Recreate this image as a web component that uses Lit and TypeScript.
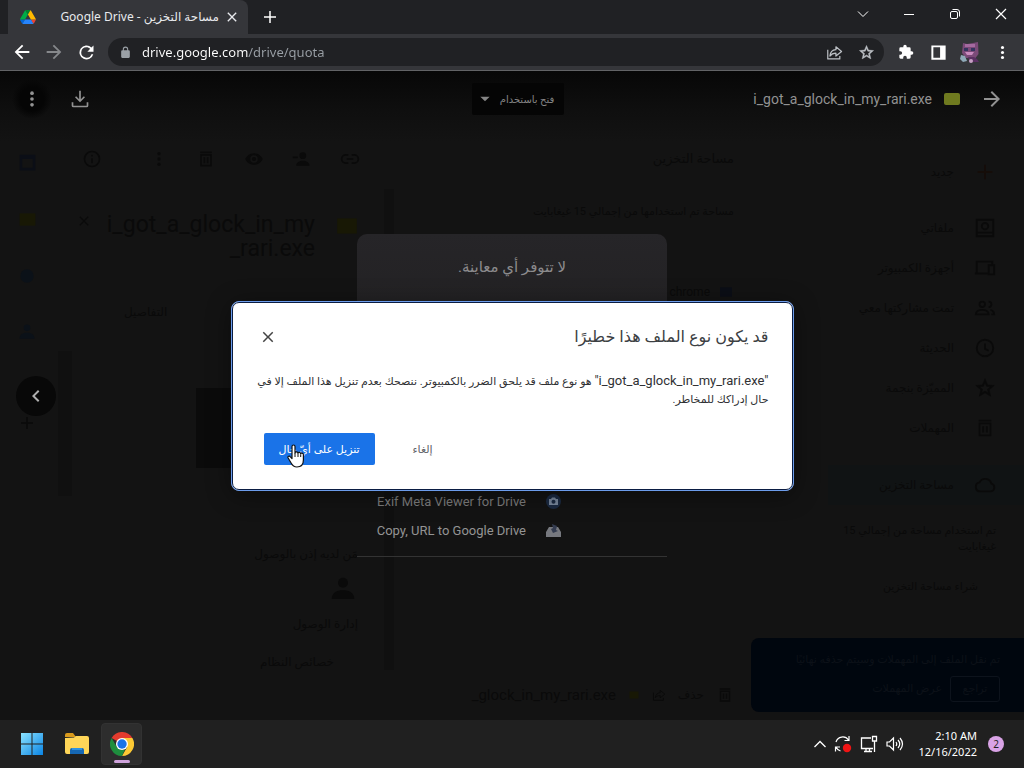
import { LitElement, html, css, svg, nothing } from "lit";
import { customElement, state } from "lit/decorators.js";

const glyphs: Record<string, unknown> = {
  back: svg`<path d="M20 11H7.8l5.6-5.6L12 4l-8 8 8 8 1.4-1.4L7.8 13H20z"/>`,
  forward: svg`<path d="M12 4l-1.4 1.4 5.6 5.6H4v2h12.2l-5.6 5.6L12 20l8-8z"/>`,
  reload: svg`<path d="M17.65 6.35A8 8 0 1 0 19.73 14h-2.08A6 6 0 1 1 12 6c1.66 0 3.14.69 4.22 1.78L13 11h7V4z"/>`,
  lock: svg`<path d="M18 8h-1V6A5 5 0 0 0 7 6v2H6a2 2 0 0 0-2 2v10a2 2 0 0 0 2 2h12a2 2 0 0 0 2-2V10a2 2 0 0 0-2-2zM9 6a3 3 0 0 1 6 0v2H9z"/>`,
  share: svg`<path fill="none" stroke="currentColor" stroke-width="1.7" stroke-linejoin="round" d="M2.500 8v13h17v-4M14 4l8 6.500-8 6.500v-4c-4 0-6.500 1.200-8.500 4C6 12 9 8.300 14 8z"/>`,
  star: svg`<path stroke="currentColor" stroke-width=".6" d="M22 9.240l-7.190-.620L12 2 9.190 8.630 2 9.240l5.460 4.730L5.820 21 12 17.270 18.180 21l-1.630-7.030zM12 15.400l-3.760 2.270 1-4.280-3.320-2.880 4.380-.380L12 6.100l1.710 4.040 4.380.380-3.320 2.880 1 4.280z"/>`,
  puzzle: svg`<path d="M20.500 11H19V7a2 2 0 0 0-2-2h-4V3.500a2.500 2.500 0 0 0-5 0V5H4a2 2 0 0 0-2 2v3.800h1.500a2.700 2.700 0 0 1 0 5.400H2V20c0 1.100.9 2 2 2h3.800v-1.500a2.700 2.700 0 0 1 5.400 0V22H17a2 2 0 0 0 2-2v-4h1.500a2.500 2.500 0 0 0 0-5z"/>`,
  panel: svg`<path d="M3 3h18v18H3zM5.500 5.500v13H14v-13z" fill-rule="evenodd"/>`,
  dots: svg`<circle cx="12" cy="5" r="2.200"/><circle cx="12" cy="12" r="2.200"/><circle cx="12" cy="19" r="2.200"/>`,
  close: svg`<path d="M19 6.400 17.600 5 12 10.600 6.400 5 5 6.400 10.600 12 5 17.600 6.400 19 12 13.400 17.600 19 19 17.600 13.400 12z"/>`,
  plus: svg`<path d="M13 4h-2v7H4v2h7v7h2v-7h7v-2h-7z"/>`,
  download: svg`<path d="M11 2h2v10.200l3.600-3.600L18 10l-6 6-6-6 1.400-1.400 3.600 3.600zM2 16h2v4h16v-4h2v4a2 2 0 0 1-2 2H4a2 2 0 0 1-2-2z"/>`,
  chevronLeft: svg`<path d="M15.400 7.400 14 6l-6 6 6 6 1.400-1.400L10.800 12z"/>`,
  caret: svg`<path d="M4 8h16l-8 8z"/>`,
  trash: svg`<path d="M5 3h14v2H5zM5 6h14v15H5zm2 2v11h10V8zm2 2h2v7H9zm4 0h2v7h-2z" fill-rule="evenodd"/>`,
  eye: svg`<path d="M12 5C7 5 3 8.500 1.500 12 3 15.500 7 19 12 19s9-3.500 10.500-7C21 8.500 17 5 12 5zm0 2.500a4.500 4.500 0 1 1 0 9 4.500 4.500 0 0 1 0-9z" fill-rule="evenodd"/><circle cx="12" cy="12" r="2.500"/>`,
  personAdd: svg`<circle cx="13" cy="8" r="4"/><path d="M5 20c0-4 4-6 8-6s8 2 8 6zM1 9h6v2H1z"/>`,
  link: svg`<path fill="none" stroke="currentColor" stroke-width="2" d="M10 7H7a5 5 0 0 0 0 10h3M14 7h3a5 5 0 0 1 0 10h-3M8 12h8"/>`,
  info: svg`<path fill="none" stroke="currentColor" stroke-width="2" d="M12 3a9 9 0 1 0 0 18 9 9 0 0 0 0-18zM12 11v6M12 7v2"/>`,
  drive: svg`<path fill="none" stroke="currentColor" stroke-width="2" d="M3 3h18v18H3zM3 17h18M12 6.500a3.500 3.500 0 1 0 0 7 3.500 3.500 0 0 0 0-7z"/>`,
  devices: svg`<path fill="none" stroke="currentColor" stroke-width="2" d="M3 17V5h17v3M1 18h14M16 9h6v10h-6z"/>`,
  people: svg`<path fill="none" stroke="currentColor" stroke-width="2" d="M9 5a3 3 0 1 0 0 6 3 3 0 0 0 0-6zM2 19c0-3 3-5 7-5s7 2 7 5zM16 5a3 3 0 0 1 0 6M18 14c3 1 4 3 4 5h-3"/>`,
  clock: svg`<path fill="none" stroke="currentColor" stroke-width="2" d="M12 3a9 9 0 1 0 0 18 9 9 0 0 0 0-18zM12 7v6l4 2"/>`,
  cloud: svg`<path fill="none" stroke="currentColor" stroke-width="2" d="M7 19a5 5 0 0 1-1-9.900 7 7 0 0 1 13 1.500A4.300 4.300 0 0 1 18.500 19z"/>`,
  square: svg`<path d="M3 3h18v18H3zm3 5v10h12V8z" fill-rule="evenodd"/>`,
  blob: svg`<path d="M3 5h18v14H3z"/>`,
  disc: svg`<circle cx="12" cy="12" r="8"/>`,
  person: svg`<circle cx="12" cy="7" r="4"/><path d="M3 20c0-5 4-7 9-7s9 2 9 7z"/>`,
};

const icon = (name: string, size = 20, cls = "") => html`<svg class="ic ${cls}" width=${size} height=${size} viewBox="0 0 24 24" aria-hidden="true">${glyphs[name]}</svg>`;

const FILE = "i_got_a_glock_in_my_rari.exe";
const QUOTED_FILE = `"${FILE}"`;

const base = css`
  * { box-sizing: border-box; }
  button { font: inherit; color: inherit; background: none; border: 0; padding: 0; margin: 0; display: inline-flex; align-items: center; justify-content: center; flex: none; }
  a { color: inherit; text-decoration: none; }
  p, h1, h2, ul { margin: 0; padding: 0; font-weight: 400; list-style: none; }
  svg { display: block; flex: none; }
  .ic { fill: currentColor; }
`;

@customElement("browser-chrome")
class BrowserChrome extends LitElement {
  static styles = [base, css`
    :host { display: block; background: #202124; color: #fff; border-bottom: 1px solid #626366; font-family: "Noto Sans", "DejaVu Sans", sans-serif; }
    .strip { display: flex; height: 34px; padding-left: 8px; }
    .tab { display: flex; align-items: center; width: 240px; background: #35363a; border-radius: 0 8px 0 0; padding: 0 8px 0 12px; font-size: 12px; color: #e8eaed; }
    .title { flex: 1; text-align: right; white-space: nowrap; overflow: hidden; padding: 0 5px 0 16px; line-height: 20px; }
    .new { width: 44px; }
    .win { margin-left: auto; display: flex; padding-bottom: 6px; }
    .win button { width: 46px; }
    .bar { display: flex; align-items: center; height: 36px; background: #35363a; padding: 0 6px; }
    .nav { width: 32px; height: 32px; }
    .off { color: #86888b; }
    .omni { flex: 1; display: flex; align-items: center; height: 28px; border-radius: 14px; background: #202124; margin: 0 6px; padding: 0 2px 0 11px; color: #bdc1c6; }
    .lock { color: #9aa0a6; }
    input { flex: 1; min-width: 0; border: 0; outline: 0; padding: 0; margin-left: 10px; height: 24px; font: 13px "Noto Sans", sans-serif; color: transparent; background: linear-gradient(90deg, #fff 106px, #9aa0a6 106px) text; -webkit-background-clip: text; }
  `];
  render() {
    return html`
      <div class="strip">
        <div class="tab">
          <svg width="16" height="16" viewBox="0 0 88 78"><path fill="#0066da" d="M6.600 66.850l3.850 6.650c.8 1.400 1.950 2.500 3.300 3.300L27.500 53H0c0 1.550.4 3.100 1.200 4.500z"/><path fill="#00ac47" d="M43.650 25 29.900 1.200c-1.350.8-2.500 1.900-3.300 3.300L1.200 48.500A9 9 0 0 0 0 53h27.500z"/><path fill="#ea4335" d="M73.550 76.800c1.350-.8 2.500-1.900 3.300-3.300l1.600-2.750L86.100 57.500c.8-1.400 1.200-2.950 1.200-4.500H59.800l5.850 11.500z"/><path fill="#00832d" d="M43.650 25 57.400 1.200C56.050.4 54.500 0 52.900 0H34.400c-1.600 0-3.150.45-4.500 1.200z"/><path fill="#2684fc" d="M59.800 53H27.500L13.750 76.800c1.350.8 2.900 1.200 4.500 1.200h50.800c1.600 0 3.150-.45 4.500-1.200z"/><path fill="#ffba00" d="M73.400 26.500 60.700 4.500c-.8-1.400-1.950-2.500-3.300-3.300L43.650 25 59.800 53h27.450c0-1.550-.4-3.100-1.200-4.500z"/></svg>
          <span class="title" dir="rtl">مساحة التخزين - Google Drive</span>
          <button aria-label="Close tab">${icon("close", 16)}</button>
        </div>
        <button class="new" aria-label="New tab">${icon("plus", 18)}</button>
        <div class="win">
          <button aria-label="Search tabs"><svg width="12" height="12" fill="none" stroke="#fff"><path d="M1 3.500l5 5 5-5"/></svg></button>
          <button aria-label="Minimize"><svg width="10" height="10" stroke="#fff"><path d="M0 5.500h10"/></svg></button>
          <button aria-label="Restore"><svg width="10" height="10" fill="none" stroke="#fff"><rect x=".5" y="2.500" width="7" height="7" rx="1.500"/><path d="M2.500.5H7A2.500 2.500 0 0 1 9.500 3v4.500"/></svg></button>
          <button aria-label="Close"><svg width="12" height="12" stroke="#fff" stroke-width="1.200"><path d="M1 1l10 10M11 1 1 11"/></svg></button>
        </div>
      </div>
      <div class="bar">
        <button class="nav" aria-label="Back">${icon("back", 22)}</button>
        <button class="nav off" aria-label="Forward">${icon("forward", 22)}</button>
        <button class="nav" aria-label="Reload">${icon("reload", 21)}</button>
        <div class="omni">
          ${icon("lock", 13, "lock")}
          <input aria-label="Address" value="drive.google.com/drive/quota" spellcheck="false">
          <button class="nav" aria-label="Share">${icon("share", 17)}</button>
          <button class="nav" aria-label="Bookmark">${icon("star", 17)}</button>
        </div>
        <button class="nav" aria-label="Extensions">${icon("puzzle", 16)}</button>
        <button class="nav" aria-label="Side panel">${icon("panel", 19)}</button>
        <button class="nav" aria-label="Profile">
          <svg width="20" height="22" viewBox="0 0 20 22"><path fill="#7b4a78" d="M3 2l4 1 6-1 5-1 .500 12-3 4H6l-4-5z"/><path fill="#a56aa0" d="M5 3h10v3H5z"/><path fill="#35355f" d="M4 7h4v3H4zM11 7h4v3h-4z"/><path fill="#c98bbf" d="M5 11h9l-2 3H7z"/><path fill="#8fa9b8" d="M1 14l4 1 2 5-4 1-3-3z"/><path fill="#5a3062" d="M8 16h6l3 2 2 3h-9z"/><circle cx="11" cy="20" r="2" fill="#c7a0c4"/></svg>
        </button>
        <button class="nav" aria-label="Menu">${icon("dots", 17)}</button>
      </div>`;
  }
}

@customElement("drive-page")
class DrivePage extends LitElement {
  static styles = [base, css`
    :host { display: flex; height: 100%; background: linear-gradient(#070707, #0f0f0f 40px, #131313 70px); color: #0a0a0a; font: 12px/16px Roboto, "DejaVu Sans", sans-serif; overflow: hidden; }
    .rail { width: 54px; flex: none; display: flex; flex-direction: column; align-items: center; gap: 36px; padding-top: 81px; }
    .blue { color: #0b0e16; } .yellow { color: #181805; } .navy { color: #0b1118; } .red { color: #150d09; }
    .details { width: 340px; flex: none; display: flex; padding: 78px 0 0 4px; }
    .info { flex: 1; padding-left: 10px; }
    .tools { display: flex; gap: 28px; align-items: center; }
    .tools :first-child { margin-right: 20px; }
    .name { display: flex; align-items: flex-start; justify-content: space-between; padding: 44px 24px 0 0; margin-left: -6px; }
    .name h2 { font-size: 23px; line-height: 24px; width: 228px; padding-right: 12px; text-align: right; }
    .label { margin: 43px 0 0 42px; }
    .thumb { height: 80px; margin: 68px 20px 0 114px; background: #0b0b0b; }
    .meta { padding: 78px 26px 0 0; display: flex; flex-direction: column; align-items: flex-start; gap: 12px; }
    .meta p:last-child { padding: 10px 24px 0 0; }
    .scroll { width: 10px; margin: 40px 0 50px; background: #101010; }
    .inner { width: 14px; height: 145px; margin: 202px 0 0; }
    .main { flex: 1; padding: 79px 0 0; display: flex; flex-direction: column; }
    .main h1 { font-size: 13px; line-height: 18px; }
    .sub { padding-top: 36px; font-size: 11px; }
    .file { display: flex; gap: 8px; align-items: center; padding-top: 64px; }
    .row { display: flex; gap: 12px; align-items: center; margin-top: auto; padding-bottom: 16px; font-size: 15px; white-space: nowrap; }
    .row .word { font-size: 12px; }
    .side { width: 290px; flex: none; padding: 81px 28px 0 94px; }
    .side li a { display: flex; gap: 20px; align-items: center; height: 40px; }
    .side .new { padding-bottom: 16px; height: 56px; }
    .side .on { background: #101314; margin: 17px -28px 0 0; padding-right: 28px; }
    .quota { font-size: 11px; padding-top: 18px; }
    .buy { padding: 24px 18px 0; display: block; font-size: 11px; }
    .toast { position: absolute; right: 0; bottom: 8px; width: 273px; height: 74px; padding: 14px 24px; border-radius: 8px 0 0 8px; background: #00060e; color: #0c1118; font-size: 11px; white-space: nowrap; display: flex; flex-direction: column; gap: 8px; }
    .toast div { display: flex; gap: 8px; align-items: center; }
    .toast button { border: 1px solid #0d131c; border-radius: 3px; width: 50px; height: 26px; }
  `];
  render() {
    const items = [["drive", "ملفاتي"], ["devices", "أجهزة الكمبيوتر"], ["people", "تمت مشاركتها معي"], ["clock", "الحديثة"], ["star", "المميّزة بنجمة"], ["trash", "المهملات"], ["cloud", "مساحة التخزين"]];
    return html`
      <aside class="rail">${icon("square", 21, "blue")}${icon("blob", 21, "yellow")}${icon("disc", 20, "navy")}${icon("person", 20, "navy")}<span></span>${icon("plus", 18)}</aside>
      <section class="details">
        <div class="scroll inner"></div>
        <div class="info">
          <div class="tools">${icon("info")}${icon("dots", 18)}${icon("trash")}${icon("eye")}${icon("personAdd")}${icon("link")}</div>
          <div class="name">${icon("close", 16)}<h2>i_got_a_glock_in_my _rari.exe</h2>${icon("blob", 26, "yellow")}</div>
          <p class="label">التفاصيل</p>
          <div class="thumb"></div>
          <div class="meta" dir="rtl"><p>مَن لديه إذن بالوصول</p>${icon("person", 30)}<p>إدارة الوصول</p><p>خصائص النظام</p></div>
        </div>
        <div class="scroll"></div>
      </section>
      <section class="main" dir="rtl">
        <h1>مساحة التخزين</h1>
        <p class="sub">مساحة تم استخدامها من إجمالي 15 غيغابايت</p>
        <div class="file">${icon("blob", 16, "blue")}<span>chrome</span></div>
        <div class="row">${icon("trash", 18)}<span class="word">حذف</span>${icon("share", 14)}${icon("blob", 12, "yellow")}<span dir="ltr">_glock_in_my_rari.exe</span></div>
      </section>
      <nav class="side" dir="rtl">
        <ul>
          <li><a class="new" href="#new">${icon("plus", 22, "red")}جديد</a></li>
          ${items.map(([g, t]) => html`<li><a href="#${g}" class=${g === "cloud" ? "on" : ""}>${icon(g, 22)}${t}</a></li>`)}
        </ul>
        <p class="quota">تم استخدام مساحة من إجمالي 15 غيغابايت</p>
        <a class="buy" href="#buy">شراء مساحة التخزين</a>
      </nav>
      <div class="toast" dir="rtl"><p>تم نقل الملف إلى المهملات وسيتم حذفه نهائيًا</p><div><button>تراجع</button><span>عرض المهملات</span></div></div>`;
  }
}

@customElement("file-preview")
class FilePreview extends LitElement {
  static styles = [base, css`
    :host { display: flex; flex-direction: column; height: 100%; color: #929292; font-family: Roboto, "DejaVu Sans", sans-serif; }
    .bar { display: grid; grid-template-columns: 1fr auto 1fr; align-items: center; height: 56px; padding: 0 12px 0 24px; }
    .left, .right { display: flex; align-items: center; gap: 8px; }
    .left { margin-left: -12px; }
    .right { justify-content: flex-end; gap: 12px; font-size: 14px; white-space: nowrap; }
    .act { width: 40px; height: 40px; }
    .round { border-radius: 50%; background: radial-gradient(closest-side, #050505 60%, transparent); }
    .open { gap: 8px; width: 92px; height: 32px; padding-right: 4px; background: #050505; font-size: 10px; border-radius: 2px; color: #858585; }
    .chip { width: 16px; height: 12px; border-radius: 2px; background: #6f7a1f; }
    .card { align-self: center; width: 310px; margin-top: 107px; border-bottom: 1px solid #333; }
    .card h2 { height: 200px; padding-top: 20px; border-radius: 10px 10px 0 0; background: linear-gradient(#262528, #232224 66px, #131313 190px); color: #8c8b8d; font-size: 15px; line-height: 26px; text-align: center; }
    ul { padding: 53px 106px 11px 0; }
    li { display: flex; justify-content: flex-end; align-items: center; gap: 20px; height: 29px; font-size: 13px; white-space: nowrap; color: #7c7c7c; }
    li:last-child { color: #949494; }
    .prev { position: absolute; left: 16px; top: 305px; width: 40px; height: 40px; border-radius: 50%; background: #080808; color: #b0b0b0; }
  `];
  render() {
    return html`
      <header class="bar">
        <div class="left"><button class="act round" aria-label="المزيد من الإجراءات">${icon("dots", 20)}</button><button class="act" aria-label="تنزيل">${icon("download", 20)}</button></div>
        <button class="open" dir="rtl">فتح باستخدام${icon("caret", 14)}</button>
        <div class="right"><span>${FILE}</span><span class="chip"></span><button class="act" aria-label="رجوع">${icon("forward", 24)}</button></div>
      </header>
      <button class="prev" aria-label="السابق">${icon("chevronLeft", 24)}</button>
      <section class="card">
        <h2 dir="rtl">لا تتوفر أي معاينة.</h2>
        <ul>
          <li>Exif Meta Viewer for Drive<svg width="15" height="15" viewBox="0 0 15 15"><circle cx="7.500" cy="7.500" r="7.500" fill="#1b2a42"/><path fill="#77869b" d="M3 5h2l1-1.500h3L10 5h2v6H3z"/><circle cx="7.500" cy="7.800" r="2" fill="#1b2a42"/></svg></li>
          <li>Copy, URL to Google Drive<svg width="15" height="15" viewBox="0 0 15 15"><path fill="#77797f" d="M0 14V9l3-5h9l3 5v5z"/><path fill="#343c50" d="M6 1l5 2-1 4 2 1-5 2-2-4 2-1z"/></svg></li>
        </ul>
      </section>`;
  }
}

@customElement("warning-dialog")
class WarningDialog extends LitElement {
  static styles = [base, css`
    :host { display: block; width: 563px; font-family: Roboto, "DejaVu Sans", sans-serif; }
    .dialog { position: relative; background: #fff; color: #303134; border: 1px solid #6c9ceb; outline: 1px solid #0a1c42; outline-offset: -2px; border-radius: 8px; padding: 21px 24px 25px 32px; box-shadow: 0 4px 24px rgba(0, 0, 0, .4); }
    .head { display: flex; align-items: center; justify-content: space-between; height: 28px; }
    h1 { font-size: 16px; line-height: 28px; color: #3c4043; }
    .x { width: 24px; height: 24px; margin-left: -8px; color: #444; }
    p { font-size: 11px; line-height: 18px; padding: 21px 0 24px; margin-left: -8px; }
    bdi { font-size: 13px; }
    .acts { display: flex; direction: ltr; gap: 16px; font-size: 11px; }
    .acts button { height: 32px; border-radius: 2px; padding: 0 16px; min-width: 64px; color: #5f6368; }
    .acts .go { width: 111px; background: #1a73e8; color: #fff; white-space: nowrap; padding: 0; }
    .cursor { position: absolute; left: 55px; top: 142px; }
  `];
  render() {
    return html`
      <div class="dialog" role="dialog" aria-labelledby="t" dir="rtl">
        <div class="head"><h1 id="t">قد يكون نوع الملف هذا خطيرًا</h1><button class="x" aria-label="إغلاق">${icon("close", 18)}</button></div>
        <p><bdi dir="ltr">${QUOTED_FILE}</bdi> هو نوع ملف قد يلحق الضرر بالكمبيوتر. ننصحك بعدم تنزيل هذا الملف إلا في حال إدراكك للمخاطر.</p>
        <div class="acts"><button class="go" dir="rtl">تنزيل على أيّ حال</button><button dir="rtl">إلغاء</button></div>
        <svg class="cursor" width="18" height="24" viewBox="0 0 18 24"><path fill="#fff" stroke="#111" stroke-width="1.200" stroke-linejoin="round" d="M5 14.500V2.500a1.500 1.500 0 0 1 3 0V9c0-1.500 3-1.400 3 .3 0-1.300 2.700-1.200 2.700.6 0-1.200 2.700-1 2.700.8V16c0 4-2 7-6.500 7-3 0-4.500-1.500-5.800-4L1 13.800c-.5-1.600 1.500-2.300 2.400-1z"/><path stroke="#111" d="M8 9v4M11 9.500V13M13.700 10.500V13"/></svg>
      </div>`;
  }
}

@customElement("task-bar")
class TaskBar extends LitElement {
  static styles = [base, css`
    :host { display: flex; align-items: center; justify-content: space-between; height: 48px; background: #202020; color: #fff; padding: 0 20px 0 11px; font: 11px/16px "Noto Sans", sans-serif; }
    .apps, .tray { display: flex; align-items: center; }
    .apps { gap: 4px; }
    .apps button { width: 41px; height: 42px; border-radius: 4px; }
    .apps .on { background: #2d2d2d; flex-direction: column; padding-top: 6px; gap: 4px; border: 1px solid #323232; }
    .pill { width: 16px; height: 3px; border-radius: 2px; background: #cfa3dc; }
    .tray { gap: 8px; }
    .clock { text-align: right; margin: 0 3px 0 6px; }
    .badge { width: 16px; height: 16px; border-radius: 50%; background: #d9a3e6; color: #222; text-align: center; font-size: 10px; }
  `];
  render() {
    return html`
      <div class="apps">
        <button aria-label="Start"><svg width="24" height="24"><defs><linearGradient id="w" x2="1" y2="1"><stop stop-color="#8be3ff"/><stop offset="1" stop-color="#0a84e4"/></linearGradient></defs><path fill="url(#w)" d="M1 1h10.500v10.500H1zM12.500 1H23v10.500H12.500zM1 12.500h10.500V23H1zM12.500 12.500H23V23H12.500z"/></svg></button>
        <button aria-label="File Explorer"><svg width="26" height="24" viewBox="0 0 26 24"><path fill="#d99a1c" d="M1 3q0-2 2-2h6l3 4H1z"/><path fill="#ffd658" d="M1 6l9-.5L12 4h11q2 0 2 2v14q0 2-2 2H3q-2 0-2-2z"/><path fill="#1668b5" d="M6 22v-4q0-2 2-2h10q2 0 2 2v4z"/><path fill="#2f93e0" d="M8 16h10v2H8z"/></svg></button>
        <button class="on" aria-label="Chrome"><svg width="24" height="24" viewBox="0 0 24 24"><path fill="#e33b2e" d="M12 12 1.600 6A12 12 0 0 1 22.400 6z"/><path fill="#fcc934" d="M12 6h10.400A12 12 0 0 1 12 24l5.200-9z"/><path fill="#1e8e3e" d="M1.600 6l5.200 9 5.200 3 3-.8L12 24A12 12 0 0 1 1.600 6z"/><circle cx="12" cy="12" r="6" fill="#fff"/><circle cx="12" cy="12" r="4.700" fill="#1a73e8"/></svg><span class="pill"></span></button>
      </div>
      <div class="tray">
        <button aria-label="Show hidden icons"><svg width="12" height="8" fill="none" stroke="#fff" stroke-width="1.300"><path d="M.5 7 6 1.500 11.500 7"/></svg></button>
        <button aria-label="Updates"><svg width="18" height="18" fill="none" stroke="#fff" stroke-width="1.200"><path d="M2 7a7 7 0 0 1 12.500-2M15 1v4.500h-4.500M6.500 16A7 7 0 0 1 2 12M1.500 16.500V12H6"/><circle cx="13" cy="13" r="4.200" fill="#f01414" stroke="none"/></svg></button>
        <button aria-label="Network"><svg width="18" height="18" fill="none" stroke="#fff" stroke-width="1.300"><path d="M11 3H1.500v10.500H13M4 16.500h8M6 14v2M9.500 14v2M12.500 1.500h4v4.500h-4zM14.500 6v11"/></svg></button>
        <button aria-label="Volume"><svg width="18" height="16" fill="none" stroke="#fff" stroke-width="1.200"><path d="M1 6h2.500L7.500 2v12l-4-4H1zM10 6q1.500 2 0 4M12 4q3.500 4 0 8M14 2q5 6 0 12"/></svg></button>
        <div class="clock">2:10 AM<br>12/16/2022</div>
        <span class="badge">2</span>
      </div>`;
  }
}

@customElement("app-root")
class AppRoot extends LitElement {
  @state() private warning = true;
  static styles = css`
    :host { display: flex; flex-direction: column; height: 100vh; overflow: hidden; background: #131313; }
    .page { position: relative; flex: 1; min-height: 0; }
    .layer { position: absolute; inset: 0; }
    .center { display: flex; align-items: center; justify-content: center; padding-top: 1px; }
  `;
  render() {
    return html`
      <browser-chrome></browser-chrome>
      <main class="page">
        <drive-page inert></drive-page>
        <file-preview class="layer"></file-preview>
        ${this.warning ? html`<div class="layer center"><warning-dialog></warning-dialog></div>` : nothing}
      </main>
      <task-bar></task-bar>`;
  }
}
